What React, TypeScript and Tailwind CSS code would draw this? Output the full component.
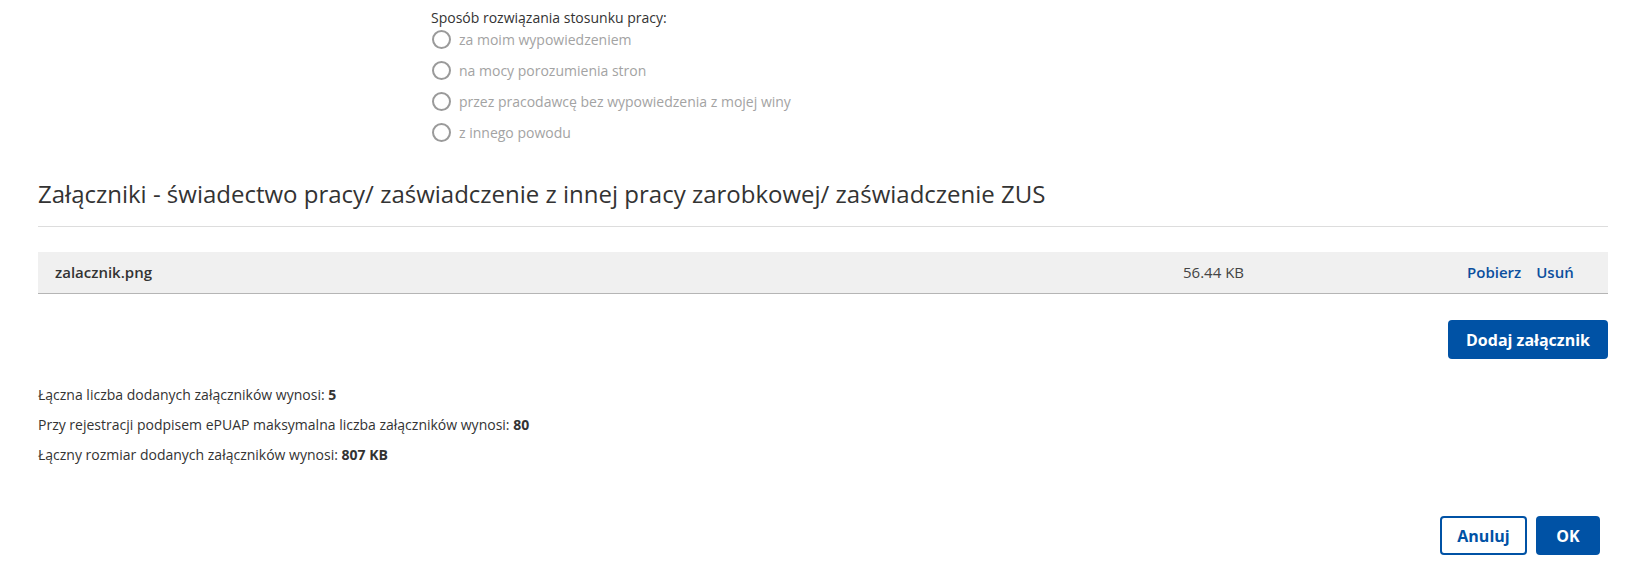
const options = [
  'za moim wypowiedzeniem',
  'na mocy porozumienia stron',
  'przez pracodawcę bez wypowiedzenia z mojej winy',
  'z innego powodu',
]

function Radio({ label }: { label: string }) {
  return (
    <label className="flex items-center h-[31px] cursor-default">
      <span className="w-[19px] h-[19px] rounded-full border-2 border-[#9a9a9a] mr-[8px] ml-[1px]" />
      <span className="text-[14px] text-[#a3a3a3]">{label}</span>
    </label>
  )
}

export default function App() {
  return (
    <div
      className="min-h-[566px] bg-white text-[#333]"
      style={{ fontFamily: '"Open Sans", "Liberation Sans", sans-serif' }}
    >
      <div className="w-[1570px] ml-[38px]">
        {/* Sposób rozwiązania */}
        <div className="ml-[393px] pt-[9px]">
          <div className="text-[14px] leading-[18px] text-[#333]">
            Sposób rozwiązania stosunku pracy:
          </div>
          <div className="-mt-[3px]">
            {options.map((o) => (
              <Radio key={o} label={o} />
            ))}
          </div>
        </div>

        {/* Załączniki */}
        <h2 className="mt-[30px] text-[24px] leading-[32px] font-normal text-[#333]">
          Załączniki - świadectwo pracy/ zaświadczenie z innej pracy zarobkowej/ zaświadczenie ZUS
        </h2>
        <div className="mt-[16px] border-t border-[#dddddd]" />

        <div className="mt-[25px] h-[42px] bg-[#f0f0f0] border-b border-[#b5b5b5] flex items-center text-[15px]">
          <div className="pl-[17px] font-semibold text-[#333] flex-1">zalacznik.png</div>
          <div className="w-[284px] text-[#444]">56.44 KB</div>
          <div className="w-[141px] flex gap-[15px] font-semibold text-[#0b4f9e]">
            <span>Pobierz</span>
            <span>Usuń</span>
          </div>
        </div>

        <div className="flex justify-end mt-[26px]">
          <button className="h-[39px] w-[160px] bg-[#0052a5] rounded-[4px] text-white font-bold text-[16px]">
            Dodaj załącznik
          </button>
        </div>

        <div className="mt-[21px] text-[14px] leading-[30px] text-[#333]">
          <div>
            Łączna liczba dodanych załączników wynosi: <b className="font-bold">5</b>
          </div>
          <div>
            Przy rejestracji podpisem ePUAP maksymalna liczba załączników wynosi: <b className="font-bold">80</b>
          </div>
          <div>
            Łączny rozmiar dodanych załączników wynosi: <b className="font-bold">807 KB</b>
          </div>
        </div>

        <div className="flex justify-end gap-[9px] mt-[46px] pr-[8px]">
          <button className="h-[39px] w-[87px] border-2 border-[#0052a5] rounded-[4px] text-[#0052a5] font-bold text-[16px] bg-white">
            Anuluj
          </button>
          <button className="h-[39px] w-[64px] bg-[#0052a5] rounded-[4px] text-white font-bold text-[16px]">
            OK
          </button>
        </div>
      </div>
    </div>
  )
}
